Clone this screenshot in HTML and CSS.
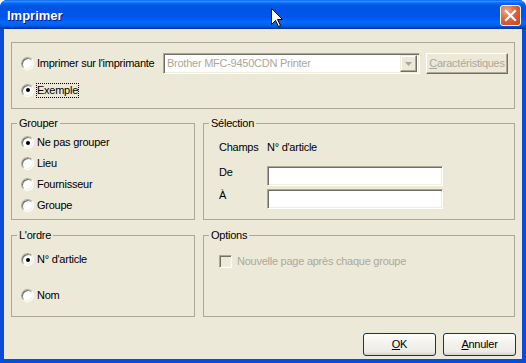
FILE: index.html
```html
<!DOCTYPE html>
<html lang="fr">
<head>
  <meta charset="UTF-8" />
  <title>Imprimer</title>
  <link rel="stylesheet" href="styles.css">
</head>
<body>
  <div class="window">

    <!-- Title bar -->
    <div class="titlebar">
      <span class="title">Imprimer</span>
      <span class="close">
        <svg width="13" height="13" viewBox="0 0 13 13"><path d="M2 2 L11 11 M11 2 L2 11" stroke="#fff" stroke-width="2.2" stroke-linecap="square"/></svg>
      </span>
    </div>

    <div class="client">

      <!-- Output: printer or preview -->
      <div class="output">
        <div class="line line-top">
          <span class="radio"></span>
          <span class="choice printer-label">Imprimer sur l'imprimante</span>
          <div class="combo">
            <span class="combo-text">Brother MFC-9450CDN Printer</span>
            <span class="combo-btn">
              <svg width="7" height="4" viewBox="0 0 7 4"><path d="M0 0 H7 L3.5 4 Z" fill="#aca899"/></svg>
            </span>
          </div>
          <button class="btn-off" type="button"><u>C</u>aractéristiques</button>
        </div>
        <div class="line line-sample">
          <span class="radio checked"></span>
          <span class="choice focus">Exemple</span>
        </div>
      </div>

      <div class="groups">
        <fieldset class="group">
          <legend>Grouper</legend>
          <div class="group-body">
            <div class="opt"><span class="radio checked"></span><span class="choice">Ne pas grouper</span></div>
            <div class="opt"><span class="radio"></span><span class="choice">Lieu</span></div>
            <div class="opt"><span class="radio"></span><span class="choice">Fournisseur</span></div>
            <div class="opt"><span class="radio"></span><span class="choice">Groupe</span></div>
          </div>
        </fieldset>

        <fieldset class="group">
          <legend>Sélection</legend>
          <div class="sel-body">
            <div class="sel-row sel-head"><span class="sel-key">Champs</span><span>N° d'article</span></div>
            <div class="sel-row sel-field"><span class="sel-key">De</span><span class="edit"></span></div>
            <div class="sel-row sel-field"><span class="sel-key">À</span><span class="edit"></span></div>
          </div>
        </fieldset>

        <fieldset class="group">
          <legend>L'ordre</legend>
          <div class="order-body">
            <div class="opt"><span class="radio checked"></span><span class="choice">N° d'article</span></div>
            <div class="opt opt-far"><span class="radio"></span><span class="choice">Nom</span></div>
          </div>
        </fieldset>

        <fieldset class="group">
          <legend>Options</legend>
          <div class="options-body">
            <div class="opt"><span class="check"></span><span class="choice muted">Nouvelle page après chaque groupe</span></div>
          </div>
        </fieldset>
      </div>

      <div class="actions">
        <button class="btn" type="button"><u>O</u>K</button>
        <button class="btn" type="button"><u>A</u>nnuler</button>
      </div>
    </div>

    <!-- mouse pointer over the title bar -->
    <svg class="pointer" width="13" height="20" viewBox="0 0 13 20">
      <path d="M0.5 0.5 V16.5 L4.5 12.5 L7.5 18.5 L9.5 17.5 L6.5 11.5 H11.5 Z" fill="#fff" stroke="#000" stroke-width="1"/>
    </svg>
  </div>
</body>
</html>
```

FILE: styles.css
```css
* {
  box-sizing: border-box;
}

body, html {
  margin: 0;
  padding: 0;
  background-color: #fff;
}

body {
  width: 526px;
  height: 363px;
  font-family: "Liberation Sans", Arial, sans-serif;
  font-size: 11px;
  line-height: 13px;
  letter-spacing: -0.25px;
  color: #000;
}

.window {
  position: relative;
  height: 363px;
  display: flex;
  flex-direction: column;
  background-color: #0a4bdb;
  border-radius: 7px 7px 0 0;
  overflow: hidden;
}

.titlebar {
  flex: none;
  height: 29px;
  display: flex;
  align-items: center;
  justify-content: space-between;
  padding: 2px 5px 0 7px;
  background: linear-gradient(to bottom, #0058ee 0%, #3593ff 4%, #288eff 6%, #127dff 8%, #036ffc 10%, #0262ee 14%, #0057e5 20%, #0054e3 24%, #0055eb 56%, #005bf5 66%, #026afe 76%, #0062ef 86%, #0052d6 92%, #0040ab 96%, #003092 100%);
}

.title {
  color: #fff;
  font-weight: bold;
  font-size: 13px;
  letter-spacing: 0;
  text-shadow: 1px 1px #0f1089;
}

.close {
  width: 21px;
  height: 21px;
  display: flex;
  align-items: center;
  justify-content: center;
  border: 1px solid #fff;
  border-radius: 3px;
  background: radial-gradient(circle at 30% 25%, #f0a68c 0%, #e0643c 45%, #c7411a 100%);
}

.client {
  flex: 1;
  margin: 0 4px 4px;
  padding: 13px 7px 0;
  background-color: #ece9d8;
  display: flex;
  flex-direction: column;
}

/* group boxes */
.output {
  border: 1px solid #aca899;
  padding: 10px 0 10px 9px;
}

.line {
  display: flex;
  align-items: center;
}

.line-top {
  height: 21px;
}

.line-sample {
  height: 16px;
  margin-top: 8px;
}

.radio {
  flex: none;
  position: relative;
  width: 13px;
  height: 13px;
  margin-right: 2px;
  border-radius: 50%;
  border: 1px solid;
  border-color: #aca899 #fff #fff #aca899;
  box-shadow: inset 1px 1px 0 #716f64, inset -1px -1px 0 #f1efe2;
  background-color: #fff;
}

.radio.checked::after {
  content: "";
  position: absolute;
  left: 3.5px;
  top: 3.5px;
  width: 4px;
  height: 4px;
  border-radius: 50%;
  background-color: #000;
}

.check {
  flex: none;
  width: 13px;
  height: 13px;
  margin-right: 4px;
  border: 1px solid;
  border-color: #aca899 #fff #fff #aca899;
  box-shadow: inset 1px 1px 0 #716f64, inset -1px -1px 0 #f1efe2;
  background-color: #ece9d8;
}

.choice {
  border: 1px dotted transparent;
  white-space: nowrap;
}

.choice.focus {
  border-color: #000;
}

.muted {
  color: #aca899;
}

.printer-label {
  width: 127px;
}

.combo {
  width: 257px;
  height: 21px;
  display: flex;
  align-items: center;
  justify-content: space-between;
  padding: 2px;
  border: 1px solid;
  border-color: #aca899 #fff #fff #aca899;
  box-shadow: inset 1px 1px 0 #716f64, inset -1px -1px 0 #f1efe2;
  background-color: #fff;
}

.combo-text {
  padding-left: 1px;
  color: #aca899;
}

.combo-btn {
  width: 17px;
  height: 17px;
  display: flex;
  align-items: center;
  justify-content: center;
  border: 1px solid;
  border-color: #f1efe2 #716f64 #716f64 #f1efe2;
  box-shadow: inset -1px -1px 0 #aca899, inset 1px 1px 0 #fff;
  background-color: #ece9d8;
}

.btn-off {
  width: 82px;
  height: 21px;
  margin-left: 6px;
  padding: 0;
  font: inherit;
  letter-spacing: inherit;
  color: #aca899;
  border: 1px solid;
  border-color: #fff #716f64 #716f64 #fff;
  box-shadow: inset -1px -1px 0 #aca899;
  background-color: #ece9d8;
}

.groups {
  display: grid;
  grid-template-columns: 184px 312px;
  grid-template-rows: 103px 88px;
  column-gap: 8px;
  row-gap: 9px;
  margin-top: 8px;
}

.group {
  margin: 0;
  padding: 0;
  min-width: 0;
  border: 1px solid #aca899;
}

.group legend {
  margin-left: 5px;
  padding: 0 2px;
  line-height: 13px;
}

.group-body {
  padding: 2px 0 0 9px;
}

.opt {
  height: 21px;
  display: flex;
  align-items: center;
}

.sel-body {
  padding: 11px 0 0 15px;
}

.sel-row {
  display: flex;
}

.sel-key {
  width: 48px;
}

.sel-head {
  margin-bottom: 12px;
}

.sel-field {
  height: 20px;
  margin-bottom: 3px;
}

.edit {
  width: 176px;
  height: 20px;
  border: 1px solid;
  border-color: #aca899 #fff #fff #aca899;
  box-shadow: inset 1px 1px 0 #716f64, inset -1px -1px 0 #f1efe2;
  background-color: #fff;
}

.order-body {
  padding: 7px 0 0 9px;
}

.opt-far {
  margin-top: 15px;
}

.options-body {
  padding: 9px 0 0 15px;
}

.actions {
  display: flex;
  justify-content: flex-end;
  gap: 7px;
  margin-top: 16px;
  margin-right: -1px;
}

.btn {
  width: 73px;
  height: 23px;
  padding: 0;
  font: inherit;
  letter-spacing: inherit;
  color: #000;
  border: 1px solid #003c74;
  border-radius: 3px;
  background: linear-gradient(to bottom, #fff 0%, #f4f3ee 40%, #ecebe6 85%, #d6d0c5 100%);
}

.pointer {
  position: absolute;
  left: 271px;
  top: 8px;
}
```
